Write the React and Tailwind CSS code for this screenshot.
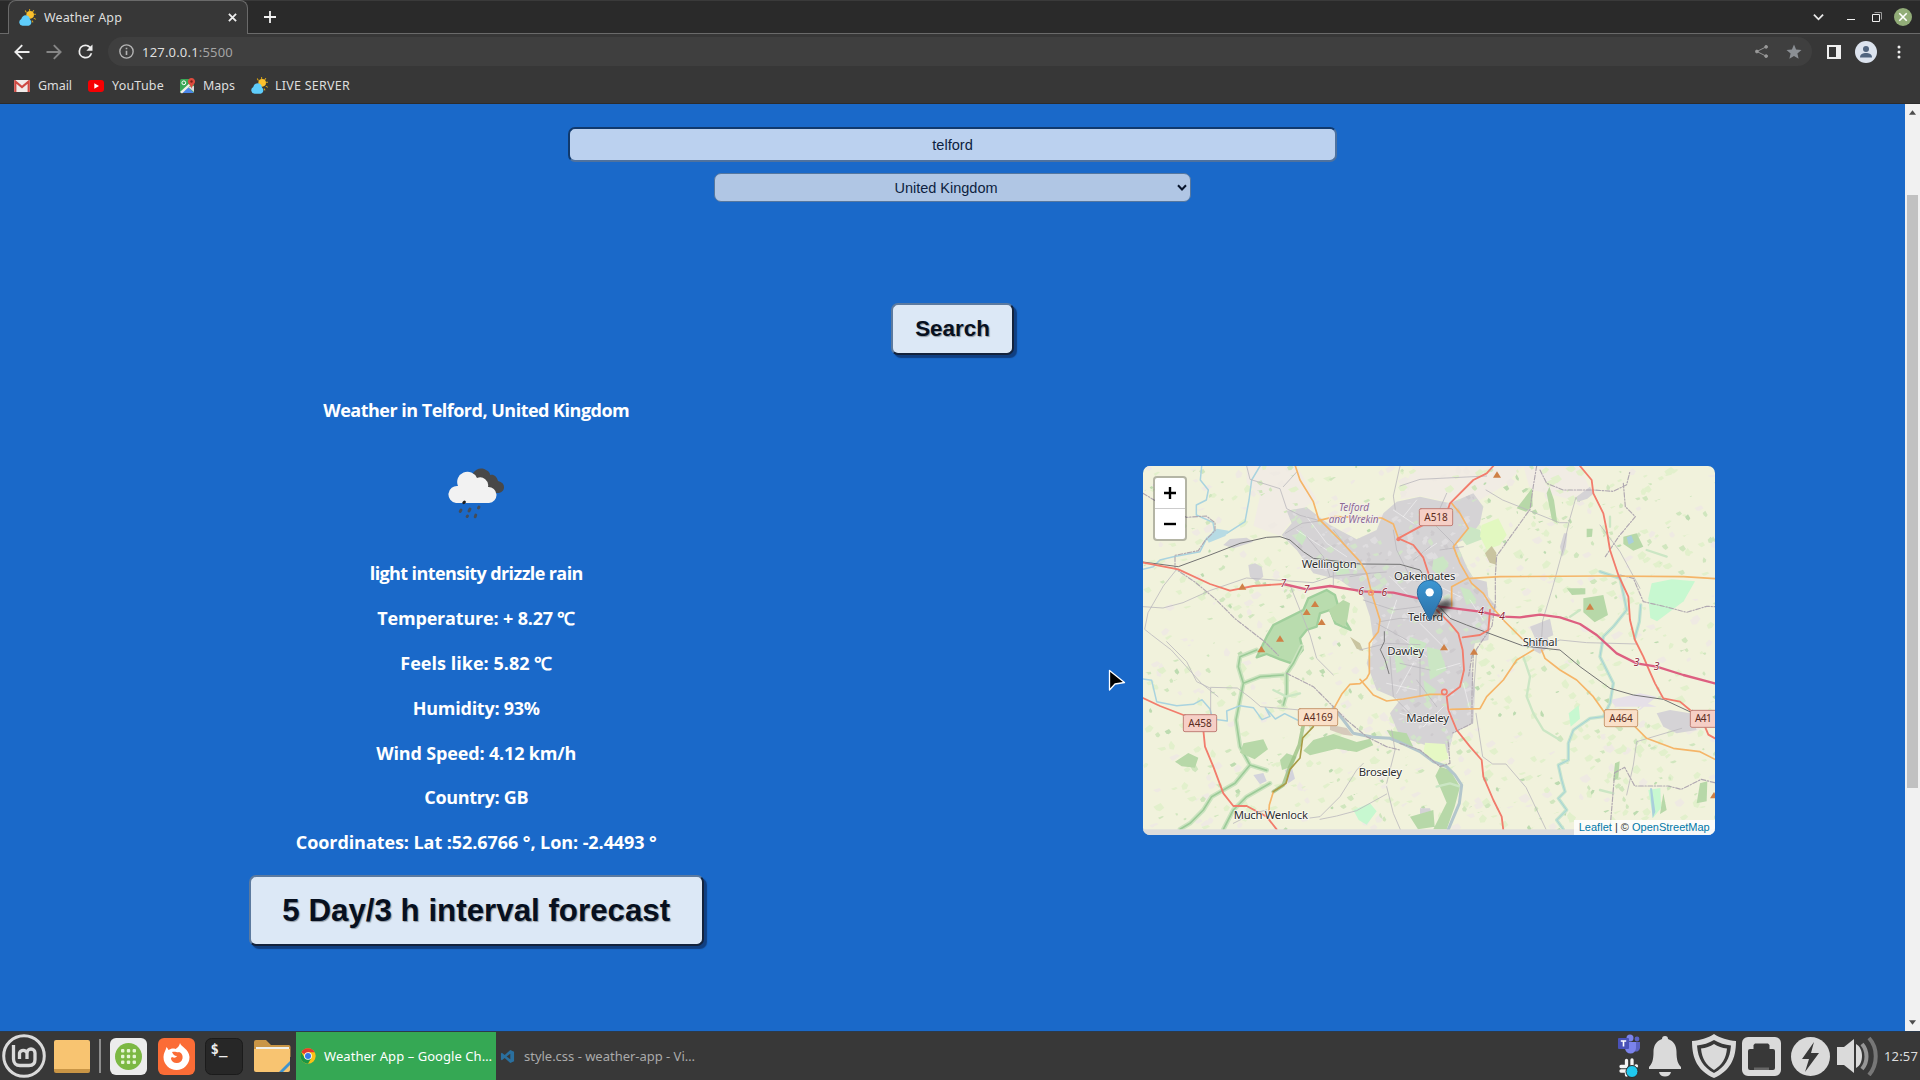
import React, { useLayoutEffect, useRef, useState } from "react";

// Text run whose letter spacing is adjusted so that it spans `w` pixels.
function Fit({ w, children, className = "" }) {
  const ref = useRef(null);
  const [ls, setLs] = useState(0);
  useLayoutEffect(() => {
    const n = ref.current.textContent.length;
    setLs((w - ref.current.getBoundingClientRect().width) / n);
  }, [w]);
  return (
    <span ref={ref} className={"inline-block whitespace-pre " + className} style={{ letterSpacing: ls + "px" }}>
      {children}
    </span>
  );
}

function SunCloud({ className }) {
  return (
    <svg viewBox="0 0 16 16" className={className}>
      <g stroke="#d9a514" strokeWidth="1" strokeLinecap="round">
        <path d="M10 .4v1.4M6 1.8l.8 1.2M13.8 1.4l-.8 1.2M15.8 5h-1.3M15.5 9.5l-1.2-.7M13 12.2l-.6-1" />
      </g>
      <circle cx="10.500" cy="5.500" r="3.600" fill="#fbc02d" />
      <path d="M3.400 15.800a3.300 3.300 0 0 1-1.200-6.300C2.400 6.600 6 4.600 8.600 6.600c1.800 1.300 1.200 2.600 2 3.400 1.900 1.800 1 5.400-1.600 5.800z" fill="#5fcdfb" />
    </svg>
  );
}

function ChromeLogo({ className }) {
  return (
    <svg viewBox="0 0 48 48" className={className}>
      <circle cx="24" cy="24" r="23" fill="#fbc116" />
      <path d="M24 24 4 12.6A23 23 0 0 1 44 12.5H24z" fill="#e33b2e" />
      <path d="M4 12.5A23 23 0 0 0 24 47l10-17.300L24 24l-10 6z" fill="#1a9646" />
      <circle cx="24" cy="24" r="11.500" fill="#fff" />
      <circle cx="24" cy="24" r="9" fill="#3779e8" />
    </svg>
  );
}

function BrowserChrome() {
  return (
    <header className="h-[104px] shrink-0 bg-[#373737] text-[#dedede] text-[12.5px] leading-[16px] border-b border-[#2c2c2c]">
      <div className="h-[34px] bg-[#2a2a2a] flex items-end border-b border-[#6a6a6a] border-t border-t-[#3a3a3a]">
        <div className="ml-2 w-[240px] h-[34px] -mb-px bg-[#373737] rounded-t-[8px] border border-b-0 border-[#6a6a6a] flex items-center pl-[10px] pr-[10px]">
          <SunCloud className="w-[17px] h-[17px]" />
          <Fit w={78} className="ml-[8px]">Weather App</Fit>
          <svg viewBox="0 0 10 10" className="w-[9px] h-[9px] ml-auto" stroke="#eee" strokeWidth="2">
            <path d="M1 1l8 8M9 1 1 9" />
          </svg>
        </div>
        <svg viewBox="0 0 12 12" className="w-[12px] h-[12px] ml-[16px] mb-[10px]" stroke="#f2f2f2" strokeWidth="1.8">
          <path d="M6 0v12M0 6h12" />
        </svg>
        <div className="ml-auto flex items-center h-[33px] pr-[8px]">
          <svg viewBox="0 0 12 8" className="w-[11px] h-[8px] mr-[23px]" fill="none" stroke="#e8e8e8" strokeWidth="2">
            <path d="M1 1.500l5 5 5-5" />
          </svg>
          <div className="w-[8px] h-px bg-[#f2f2f2] mt-[6px] mr-[17px]" />
          <svg viewBox="0 0 10 10" className="w-[10px] h-[10px] mr-[12px]" fill="none" stroke="#eee">
            <path d="M.5 2.500h7v7h-7z" />
            <path d="M2.500.5h7v7" stroke="#999" />
          </svg>
          <svg viewBox="0 0 18 18" className="w-[18px] h-[18px]">
            <circle cx="9" cy="9" r="9" fill="#92ad78" />
            <path d="M5.300 5.300l7.400 7.400M12.700 5.300l-7.400 7.400" stroke="#fff" strokeWidth="1.600" />
          </svg>
        </div>
      </div>
      <div className="h-[35px] flex items-center pl-[14px] pr-[19px]">
        <svg viewBox="0 0 16 16" className="w-[16px] h-[16px]" fill="none" stroke="#eee" strokeWidth="1.900">
          <path d="M15.500 8H2M8.200 1.200 1.400 8l6.800 6.800" />
        </svg>
        <svg viewBox="0 0 16 16" className="w-[16px] h-[16px] ml-[16px]" fill="none" stroke="#868686" strokeWidth="1.900">
          <path d="M.5 8H14M7.800 1.200 14.600 8l-6.800 6.800" />
        </svg>
        <svg viewBox="0 0 24 24" className="w-[21px] h-[21px] ml-[13px]" fill="#eee">
          <path d="M17.650 6.350A7.960 7.960 0 0 0 12 4a8 8 0 1 0 7.730 10h-2.080A6 6 0 1 1 12 6c1.660 0 3.140.690 4.220 1.780L13 11h7V4z" />
        </svg>
        <div className="ml-[12px] mr-[15px] h-[29px] flex-1 rounded-full bg-[#3f3f3f] flex items-center pl-[11px] pr-[9px]">
          <svg viewBox="0 0 14 14" className="w-[15px] h-[15px]" fill="none" stroke="#b4b4b4" strokeWidth="1.300">
            <circle cx="7" cy="7" r="6.200" />
            <path d="M7 6.200v4M7 3.500v1.400" strokeWidth="1.500" />
          </svg>
          <Fit w={91} className="ml-[8px] text-[13px]">
            127.0.0.1<span className="text-[#a4a4a4]">:5500</span>
          </Fit>
          <svg viewBox="0 0 14 14" className="w-[13px] h-[13px] ml-auto" fill="#9a9a9a" stroke="#9a9a9a">
            <path d="M12 2 2 7l10 5" fill="none" />
            <circle cx="12" cy="2" r="1.500" />
            <circle cx="2" cy="7" r="1.500" />
            <circle cx="12" cy="12" r="1.500" />
          </svg>
          <svg viewBox="0 0 24 24" className="w-[18px] h-[18px] ml-[17px]" fill="#8b8f94">
            <path d="M12 17.270 18.180 21l-1.640-7.030L22 9.240l-7.190-.610L12 2 9.190 8.630 2 9.240l5.460 4.730L5.820 21z" />
          </svg>
        </div>
        <div className="w-[14px] h-[14px] border-2 border-r-[5px] border-[#f0f0f0]" />
        <svg viewBox="0 0 22 22" className="w-[22px] h-[22px] ml-[14px]">
          <circle cx="11" cy="11" r="11" fill="#dce3ee" />
          <circle cx="11" cy="8" r="3" fill="#51657f" />
          <path d="M5 16.500c0-3.500 3-4.500 6-4.500s6 1 6 4.500z" fill="#51657f" />
        </svg>
        <svg viewBox="0 0 4 14" className="w-[4px] h-[14px] ml-[20px]" fill="#eee">
          <circle cx="2" cy="2" r="1.500" />
          <circle cx="2" cy="7" r="1.500" />
          <circle cx="2" cy="12" r="1.500" />
        </svg>
      </div>
      <div className="h-[33px] flex items-center pl-[14px]">
        <svg viewBox="0 0 16 12" className="w-[16px] h-[12px]">
          <rect width="16" height="12" rx="1" fill="#f1ebe9" />
          <path d="M1.300 12V1.500L8 7l6.700-5.500V12" fill="none" stroke="#cf4a43" strokeWidth="2.200" />
        </svg>
        <Fit w={34} className="ml-[8px]">Gmail</Fit>
        <svg viewBox="0 0 16 12" className="w-[16px] h-[12px] ml-[16px]">
          <rect width="16" height="12" rx="3" fill="#f60002" />
          <path d="M6.300 3.300v5.400L11 6z" fill="#fff" />
        </svg>
        <Fit w={52} className="ml-[8px]">YouTube</Fit>
        <svg viewBox="0 0 16 16" className="w-[16px] h-[16px] ml-[16px]">
          <rect y="1" width="14" height="14" rx="1.500" fill="#3aa757" />
          <path d="M1 15 7.500 8.500 14 15z" fill="#4a86e8" />
          <path d="M0 14 13 2l1.500 1.500L2 15.500z" fill="#f2efe6" />
          <path d="M8 9l6 5V8z" fill="#dadada" />
          <circle cx="3.800" cy="4.800" r="1.900" fill="none" stroke="#fff" strokeWidth="1" />
          <path d="M11.500 0a3.500 3.500 0 0 1 3.400 4.500c-.5 2-2.800 3-3.400 6-.6-3-2.900-4-3.400-6A3.500 3.500 0 0 1 11.500 0z" fill="#dd4b3e" />
          <circle cx="11.500" cy="3.500" r="1.200" fill="#7a1f17" />
        </svg>
        <Fit w={32} className="ml-[7px]">Maps</Fit>
        <SunCloud className="w-[17px] h-[17px] ml-[16px]" />
        <Fit w={75} className="ml-[7px]">LIVE SERVER</Fit>
      </div>
    </header>
  );
}

/* ---- Map drawing: 3 units per pixel ---- */

function patches(seed, count, size = 1) {
  let s = seed;
  const r = () => {
    s = (s * 16807) % 2147483647;
    return s / 2147483647;
  };
  return Array.from({ length: count }, () => {
    const x = 129 + r() * 1716;
    const y = 48 + r() * 1090;
    const a = (4 + r() * 16) * size;
    const b = (2 + r() * 9) * size;
    const k = r() * 12 - 6;
    return `M${x.toFixed(0)} ${y.toFixed(0)}l${a.toFixed(0)} ${(-b).toFixed(0)} ${b.toFixed(0)} ${(b + k).toFixed(0)} ${(-a * 0.6).toFixed(0)} ${b.toFixed(0)} ${(-b).toFixed(0)} ${(-k).toFixed(0)}z`;
  }).join("");
}

const PALE = patches(71, 420, 1.2);
const GREEN = patches(9001, 240, 0.8);
const DUST = patches(555, 260, 1.2);
const FOREST = patches(31337, 110, 0.7);
const TOWN_LIGHT = patches(4242, 1200, 0.9);
const TOWN_GREEN = patches(777, 800, 0.9);
const TOWN_DARK = patches(2024, 400, 0.8);

const URBAN =
  "M560 182L620 172 690 225 770 268 830 240 850 190 890 155 960 140 1050 160 1120 130 1150 170 1140 220 1110 260 1070 280 1100 350 1120 385 1160 395 1165 440 1190 470 1170 520 1165 570 1125 580 1110 640 1125 720 1120 820 1060 850 1045 910 960 880 900 860 870 790 900 750 830 720 800 640 820 570 810 500 790 440 720 390 640 370 590 300 545 255 575 220z";

const WREKIN =
  "M470 622L500 560 520 525 560 505 610 480 625 445 680 420 705 435 715 470 740 520 752 540 706 520 690 480 660 490 650 530 620 540 600 565 608 600 575 640 540 628 500 612z";

const ROADS_MINOR = [
  "M440 48l10 40 90 28 20 60 40 20 60 16M550 110l40-44M556 250l50-30 60-8M230 358l-40 50-46 80-10 50 20 16 60 46 90 100 50 40",
  "M129 470l60 4 60-16 80-36 110-38 200 14 60-20 160-12M332 715v95M332 712l80 2 40 30 30 26 120 10 40 10M570 405l60 150 20 70 50 50",
  "M900 108l60-20 200-10M1158 120l50 30 100 40 70 28 24 0M1428 142l-20 70-20 90-30 110-30 100-4 70M1500 225l60 80 60 110",
  "M1320 590l60-20 80 8 150 4M1128 790l20 130 30 22 40 0 60 70 60 126M1745 835l-135 40-10 70-20 90",
  "M200 575l60 60 30 60 42 20M860 1000l25-100-10-60M860 1010l20 80 26 60M630 1104l30-4 60-60 50-80 20-20M860 1032l-90 50-60 16-50 10M400 1120l60-30 40-10",
  "M780 600l80-20 100 4M840 515l60-10 100 6M900 48l-20 90 6 40M620 260l50 60 20 60M700 240l40 50M880 240l10 60 40 80M1000 220l60 60 10 40M960 600v140M900 640l90 20M1130 600l-10 140M870 620l10 120 70 70M950 690l60 80",
  "M790 450l90 30 80-10M830 520l90 50M700 350l0 60M750 380l60-10M990 290l-50 40M1020 300l70-10M1040 130l-40 90",
];

const BORDERS = [
  "M129 130l50 30 80 42 60-4 26 20v24l-30 30-20 30-70 14v40l60 40 60 50 60 60 90 70 40 40",
  "M1310 48l-10 60-10 70-50 70-50 70-4 60 0 80-10 70-60 90-10 60M1320 60l20 40 50 20 90 0 60 4 40-20 10-40M1570 100l6 70 30 30-50 60-40 60M1560 375l40 10 30 70 70 16 60 16 60-18 90 4",
  "M560 670l80 40 60 60 40 40 60 50 60 30 40 10M900 880l60 20 60 50 30-10-6-70M1120 610l-4 120v90l-60 30M1530 1138l10-120 4-50 30-16 30 56 100 0 40 10 60-30 40 10 20-30",
];

const ROADS_ORANGE = [
  "M586 48l14 42 40 65 15 50 65 65 60 65 20 35 15 60 25 80-5 35-27 35v90l-8 15-20 16-30 2-25 30-25 45",
  "M655 212l50-12 140 4 35 18 15 43M780 688l40 47 40 18 50-6 80-14h40M520 1025l-12 40-2 30",
  "M1055 160l25 30 25 45-45 55 20 50 35 60 35 30 25 40 35 40 60 60M1055 470v-60l45-24 100-6 300-2 250 2 95 6",
  "M1300 600l-50 30-40 60-50 50-20 36-90 2M1325 600l10 25 45 35 50 30 50 50 60 85M1600 825l40 40 80 30 80 10 45 23",
];

const ROADS_RED = [
  "M129 338l106 20 95 44 60 20 70-14 90-6M129 744l51 24 70 27 60 45 5 50 25 60 30 80 30 38h40l60 32 30 38",
  "M1180 48l-20 22-40 20-70 70-10 30-80 40-65 35 45 20 30 38 18 55 2 60M1010 480l40 40 25 30 13 50 4 60-12 50-40 30 5 40 25 60 40 50 35 40 5 50 30 70 25 50 5 40",
  "M1170 480l-5 60-25 15-52 7M1440 48l35 42 5 40 30 60 10 50 10 60 25 75 30 65 5 70 15 60 25 50 15 35 20 45 25 45 50 10 30 25M1815 830l10 24 20 11",
];

const RAIL = "M129 336L235 350 330 315 420 280 500 262 540 260 570 270 610 305 640 325 780 342 900 343 960 360 985 400 1000 450 1050 505 1100 525 1270 588 1380 600 1440 650 1530 715 1600 735 1690 748 1780 790";

const MOTORWAY = "M550 402l70 16 70-10 100 16 90 4 80 18 60 24 120 15 70 15 50 2 60-8 60 8 60 20 50 33 60 55 60 30 60 10 80 25 95 25";

const RIVERS = [
  "M305 48l-4 42 24 30-6 30-30 15v30l50 22 4 24-20 28M480 48l-25 42-8 60-12 65-55 35-60 15-20 40-80 15-40 10-20 20-32 8",
  "M129 687l26 4 15 64 60 12 50-4 26-14 24 28 8 30 44 6-2-30 40-16 40 6 26 36 24-10-14-26 30 34 28-16 44 22",
];
const SEVERN = "M700 772L730 810 760 850 820 862 870 865 900 877 960 905 1000 935 1040 950 1065 975 1085 1005 1078 1060 1045 1138";
const EAST_RIVER =
  "M1500 365L1560 385 1572 440 1580 480 1540 530 1510 560 1500 620 1540 700 1530 760 1510 800 1470 805 1420 840 1405 880 1405 930 1375 945 1385 990 1395 1025 1375 1045 1400 1080 1370 1110 1390 1138M1622 465l-4 50-14 50";
const BROOKS = "M1270 620L1290 680 1280 740 1300 790 1330 840 1380 870M1440 480l-30 20M1640 300l60 20M1530 200l0 30M520 720l40 20 40-10M1010 1010l40-10 30 10M1500 1020l40 10";
const WOOD_EDGES =
  "M470 600L420 620 415 650 430 700 420 750 408 810 420 890 450 945 405 1000 335 1040 310 1080 270 1120 240 1138M605 590L580 640 560 670 560 730 550 765M510 1000L440 1040 400 1080 370 1138M430 700L480 680 550 675M450 945l50 16";

const PEAKS = [[427, 410], [645, 462], [620, 486], [665, 516], [540, 566], [484, 598], [1191, 74], [1470, 470], [1032, 592], [1122, 605], [1842, 1036]];

const PLACES = [
  ["Wellington", 605, 354, 165],
  ["Oakengates", 882, 389, 184],
  ["Telford", 924, 512, 106],
  ["Shifnal", 1268, 588, 104],
  ["Dawley", 862, 616, 110],
  ["Madeley", 919, 815, 128],
  ["Broseley", 776, 979, 130],
  ["Much Wenlock", 401, 1106, 223],
];

const SHIELDS = [
  ["A518", 958, 176, 100, "#f6cfc6", "#c08078"],
  ["A458", 250, 794, 100, "#f6cfc6", "#c08078"],
  ["A4169", 595, 776, 118, "#fae0c8", "#c89a70"],
  ["A464", 1513, 779, 100, "#fae0c8", "#c89a70"],
];

const JUNCTIONS = [["7", 550, 411], ["7", 620, 430], ["6", 783, 434], ["6", 853, 438], ["4", 1143, 496], ["4", 1206, 509], ["3", 1610, 648], ["3", 1670, 660]];

function MapCanvas() {
  return (
    <svg viewBox="129 48 1716 1107" className="block w-full h-full font-['Noto_Sans',sans-serif]" fill="none" strokeLinejoin="round" strokeLinecap="round">
      <defs>
        <clipPath id="town"><path d={URBAN} /></clipPath>
        <linearGradient id="pin" x1="0" y1="0" x2="0" y2="1">
          <stop offset="0" stopColor="#3c97d3" />
          <stop offset="1" stopColor="#2b6fa6" />
        </linearGradient>
        <filter id="soft" x="-30%" y="-30%" width="160%" height="160%">
          <feGaussianBlur stdDeviation="6" />
        </filter>
      </defs>
      <rect x="129" y="48" width="1716" height="1107" fill="#f1f2dc" />
      <path d="M440 48h150l60 100-60 40-50 70-80-30 20-90-40-40zM940 48h330l-60 60-100 60-150-30-60 10zM1270 48h170l30 70-60 30-120-30z" fill="#f1ece4" />
      <path d={DUST} fill="#efeae3" />
      <path d={PALE} fill="#e2f0cc" />
      <path d={GREEN} fill="#d0e6be" />
      <path d={FOREST} fill="#bddbb0" />
      <path d={URBAN} fill="#d5d3d5" />
      <g clipPath="url(#town)">
        <path d={TOWN_DARK} fill="#cdcacd" />
        <path d={TOWN_LIGHT} fill="#dfdddf" />
        <path d={TOWN_GREEN} fill="#d2e3ca" />
      </g>
      <path d="M445 345l20-5 20 10 5 30-20 15-20-15zM370 285l20-18 50-4 20 12-60 20zM1430 140l40-30 12 20-20 16-30 10zM1380 290l12-40 10 0-4 40-10 30zM1290 575l50-24 10 36-30 24-20-10zM1670 790l40-10 60 10 20 50-60 10-40-20zM1290 530l60-24 10 50-50 20zM960 1075l30 0 10 30-40 0z" fill="#d5d3d6" />
      <path d="M1530 750l90-20 50 10-50 40-70-6zM1540 770l60 20 40-30 30 10" fill="#e6e0e8" />
      <path d="M565 1000l-10-40 20-10 10 36zM460 975l30-6 10 24-20 10z" fill="#d3d3dc" />
      <path d="M600 240l20 20-14 26-20-20zM700 330l40 10 10 30-40 6zM1000 330l30-12 16 30-30 30-20-20zM1110 230l30 10 10 26-50 20-16-20zM930 560l50 20-20 40-40-6zM980 590l40 10 20 60-50 30zM880 590l40 60-30 20zM970 690l40 30-30 40zM1080 410l30 10 20 30-30 16z" fill="#cbe6c4" />
      <path d="M1145 225l50-20 25 50-20 30-40 14-20-40z" fill="#e2f8c0" />
      <path d="M1645 445l10-45 60-12 70 6-34 60-40 30-40 30-20-10z" fill="#c7f8d0" />
      <path d="M1406 790l30-24 4 40-28 24zM1645 1020l36-6 2 60-24 30zM760 1080l50-20 20 24-30 40-24-14z" fill="#c7f8d0" />
      <path d="M975 878l60 4 10 44-36 14-40-24z" fill="#e6f8c4" />
      <path d={WREKIN} fill="#b9dcae" stroke="#a0cf9c" strokeWidth="7" />
      <path d={WOOD_EDGES} stroke="#cbe3bf" strokeWidth="14" />
      <path d={WOOD_EDGES} stroke="#9ccb98" strokeWidth="5" />
      <path d="M430 880l60-12 14 30-40 30-44-20zM225 935l40-26 30 14-10 30-40-4zM640 870l60-18 70 24 40-10 10 20-50 20-60-10-80 20-20-14zM540 930l20-20 30 10-14 30-30 10zM860 840l60 10 20 40-60-16zM1020 950l30 10 30 50-16 60-24 68-40 0 40-80-34-80zM1250 175l46-60 2 54-20 16zM1340 130l16 80 16 10-10-70-14-40zM1450 445l60-10 14 60-40 22-34-30zM1400 415h56v18l-40 2zM1570 260l40-10 20 40-30 12-30-20zM1460 236l18 0-2 24-16 2zM1545 940l14-6-4 50-16 10zM1800 1000l22-6-2 60-30 6zM1690 1030l10 50-20 12zM930 1100l70-20 4 50-50 8zM700 510l-14-30 44-30 20 10-8 50-10 20z" fill="#b7d8a8" />
      <path d="M1155 310l20-22 14 20 0 36-20-6zM750 560l30 20 10 24-20-8z" fill="#c9c4a0" />
      <path d="M690 824l50 10 20 24-30-4-40-14z" fill="#d6cabb" />
      <path d="M610 825l-12 60-30 70-18 50-30 20" stroke="#9cc285" strokeWidth="11" opacity=".8" />

      <path d={BROOKS} stroke="#cbe6c4" strokeWidth="7" />
      <path d={EAST_RIVER} stroke="#c4e4cd" strokeWidth="10" />
      <path d={EAST_RIVER} stroke="#a5d2d8" strokeWidth="3" />
      {RIVERS.map((d) => (
        <path key={d} d={d} stroke="#a9d3df" strokeWidth="4.500" />
      ))}
      <path d="M320 262l30-26 36 6-10 16-50 20z" fill="#b7dbe4" />
      <path d={SEVERN} stroke="#b3c6cc" strokeWidth="9" />
      <path d="M1580 262l14-6 8 20-16 8zM1650 1015l6 0 10 70-8 20z" fill="#a9cfdc" />

      <g stroke="#fff" strokeWidth="2" opacity=".7">
        <path d="M620 200l60 80 60 40M590 240l90 60M650 330l120 30M880 180l60 40M910 200l40-50M950 320l60-40M870 380l60 60M890 450l-30 90M1000 400l80 40M1110 450l40 60M900 560l80 60M860 700l90 20M940 640l-50 90M1010 660l70-20M1030 770l-60 60M1090 700l20 80M900 790l90 30M960 520l70 70" />
      </g>
      {ROADS_MINOR.map((d) => (
        <path key={d} d={d} stroke="#bcb9be" strokeWidth="2.500" />
      ))}
      {BORDERS.map((d) => (
        <path key={d} d={d} stroke="#b0a8b1" strokeWidth="3.500" strokeDasharray="14 5 4 5" />
      ))}
      <path d="M853 545v30l-12 24 14 30 12 42" stroke="#666" strokeWidth="2.500" />
      <path d={RAIL} stroke="#737373" strokeWidth="3" />
      {ROADS_ORANGE.map((d) => (
        <path key={d} d={d} stroke="#f5b568" strokeWidth="5" />
      ))}
      <path d="M640 830l-32 34-8 60-30 34-12 42-38 25" stroke="#a89b45" strokeWidth="5" />
      {ROADS_RED.map((d) => (
        <path key={d} d={d} stroke="#f27c6c" strokeWidth="5.500" />
      ))}
      <path d={MOTORWAY} stroke="#dd5f80" strokeWidth="7" />
      <circle cx="1033" cy="726" r="8" stroke="#f27c6c" strokeWidth="5" />
      <circle cx="895" cy="268" r="6" fill="#f27c6c" />
      <circle cx="813" cy="428" r="7" stroke="#f3a06b" strokeWidth="5" />

      {PEAKS.map(([x, y]) => (
        <path key={x + "-" + y} d={`M${x} ${y - 10}l12 19h-24z`} fill="#cf8146" />
      ))}

      {SHIELDS.map(([t, x, y, w, bg, line]) => (
        <g key={t}>
          <rect x={x} y={y} width={w} height="51" rx="5" fill={bg} stroke={line} strokeWidth="3" />
          <text x={x + 15} y={y + 36} textLength={w - 30} fontSize="30" fill="#5b2b20">{t}</text>
        </g>
      ))}
      <rect x="1771" y="781" width="100" height="51" rx="5" fill="#f6cfc6" stroke="#c08078" strokeWidth="3" />
      <text x="1785" y="817" textLength="50" fontSize="30" fill="#5b2b20">A41</text>

      {JUNCTIONS.map(([t, x, y]) => (
        <text key={x} x={x} y={y} textAnchor="middle" fontSize="31" fontStyle="italic" fill="#8c2435" stroke="#fff" strokeWidth="3" paintOrder="stroke">{t}</text>
      ))}
      <g fontSize="30" fontStyle="italic" fill="#8d6a93" stroke="#f4f0ee" strokeWidth="4" paintOrder="stroke">
        <text x="717" y="183" textLength="90">Telford</text>
        <text x="686" y="218" textLength="150">and Wrekin</text>
      </g>
      {PLACES.map(([t, x, y, w]) => (
        <text key={t} x={x} y={y} textLength={w} fontSize="34" fill="#2f2f2f" stroke="#fff" strokeOpacity=".75" strokeWidth="5" paintOrder="stroke">{t}</text>
      ))}
      <rect x="129" y="1138" width="1716" height="17" fill="#dcdcdc" />

      <path d="M990 508l22-48 34-12 14 16-34 26z" fill="#000" opacity=".6" filter="url(#soft)" />
      <path d="M989 391c-21 0-37 16-37 37 0 12 5 22 10 31l27 52 27-52c5-9 10-19 10-31 0-21-16-37-37-37z" fill="url(#pin)" stroke="#2c6c9f" strokeWidth="3" />
      <circle cx="989" cy="427" r="12.500" fill="#fff" />
    </svg>
  );
}

function WeatherMap() {
  return (
    <div className="relative w-[572px] h-[369px] mt-[110px] rounded-[7px] overflow-hidden">
      <MapCanvas />
      <div className="absolute left-[10px] top-[10px] w-[34px] h-[65px] rounded-[4px] border-2 border-black/25 bg-clip-padding bg-white flex flex-col">
        <div className="flex-1 flex items-center justify-center border-b border-[#ccc] pl-px">
          <svg viewBox="0 0 12 12" className="w-[12px] h-[12px]" stroke="#000" strokeWidth="2.400"><path d="M6 0v12M0 6h12" /></svg>
        </div>
        <div className="flex-1 flex items-center justify-center pl-px">
          <svg viewBox="0 0 12 12" className="w-[12px] h-[12px]" stroke="#000" strokeWidth="2.400"><path d="M0 6h12" /></svg>
        </div>
      </div>
      <div className="absolute right-0 bottom-0 h-[15px] pl-[5px] pr-[5px] bg-white/80 text-[11px] leading-[15px] text-[#333] font-['Liberation_Sans',sans-serif]">
        <Fit w={131}>
          <span className="text-[#0078a8]">Leaflet</span> | © <span className="text-[#0078a8]">OpenStreetMap</span>
        </Fit>
      </div>
    </div>
  );
}

const READINGS = [
  ["light intensity drizzle rain", 213],
  ["Temperature: + 8.27 ℃", 198],
  ["Feels like: 5.82 ℃", 152],
  ["Humidity: 93%", 127],
  ["Wind Speed: 4.12 km/h", 200],
  ["Country: GB", 104],
  ["Coordinates: Lat :52.6766 °, Lon: -2.4493 °", 361],
];

function RainCloud() {
  return (
    <svg viewBox="0 0 56 51" className="w-[56px] h-[51px]">
      <path d="M25 5C28 1 33-1 38 2c3 1 4 3 4 5 4-1 7 2 8 6 4 1 6 3 6 6 0 4-3 6-7 6H30z" fill="#484848" />
      <path d="M8 35a8.500 8.500 0 0 1 2-17 10 10 0 0 1 19-8 8 8 0 0 1 11 9 8 8 0 0 1 1 16z" fill="#f2f2f2" />
      <g stroke="#444c58" strokeWidth="2.800" strokeLinecap="round">
        <path d="M13 42l-.8 1.500M22 41l-1 2M31 39l-.5 1M19.500 48l-.4.6M27.800 47l-.6 1.800" />
        <path d="M16.500 34l-.8.800" stroke="#1c1c1c" />
      </g>
    </svg>
  );
}

function Page() {
  return (
    <main className="flex-1 bg-[#1a69c9] flex flex-col items-center pt-[23px] font-['Liberation_Sans',sans-serif]">
      <div className="w-[769px] h-[35px] pt-[2px] rounded-[7px] border-2 border-t-[#10396d] border-l-[#10396d] border-r-[#4f729e] border-b-[#4f729e] bg-[#bbd1ef] flex items-center justify-center text-[14.600px] text-[#0d1f40]">
        telford
      </div>
      <div className="mt-[11px] w-[477px] h-[29px] rounded-[7px] border border-[#55779f] bg-[#b0c6e4] flex items-center text-[14.500px] text-[#0d1f40] pr-[3px]">
        <span className="flex-1 text-center pt-[2px]">United Kingdom</span>
        <svg viewBox="0 0 10 8" className="w-[10px] h-[8px]" fill="none" stroke="#08152c" strokeWidth="2"><path d="M1 1.200l4 4.300 4-4.300" /></svg>
      </div>
      <div className="mt-[101px] w-[123px] h-[52px] rounded-[7px] border-2 border-t-[#5c7a9f] border-l-[#5c7a9f] border-r-[#14233c] border-b-[#14233c] bg-[#dce8f6] shadow-[3px_3px_1px_rgba(10,30,70,0.55)] flex items-center justify-center text-[22.400px] leading-[26px] font-bold text-[#07101f] [text-shadow:1px_1px_1px_rgba(0,0,0,0.35)]">
        Search
      </div>
      <div className="w-full grid grid-cols-2 pt-px">
        <section className="flex flex-col items-center text-white text-[18px] leading-[24px] font-bold font-['Open_Sans',sans-serif] pt-[42px]">
          <Fit w={306}>Weather in Telford, United Kingdom</Fit>
          <div className="h-[46px]" />
          <div className="mr-[1px]"><RainCloud /></div>
          <div className="mt-[42px] flex flex-col items-center gap-[20.900px]">
            {READINGS.map(([t, w]) => (
              <Fit key={t} w={w}>{t}</Fit>
            ))}
          </div>
          <div className="mt-[21px] w-[455px] h-[71px] rounded-[7px] border-2 border-t-[#5c7a9f] border-l-[#5c7a9f] border-r-[#14233c] border-b-[#14233c] bg-[#dce8f6] shadow-[3px_3px_1px_rgba(10,30,70,0.55)] flex items-center justify-center text-[31.300px] leading-[36px] font-bold text-[#07101f] font-['Liberation_Sans',sans-serif] [text-shadow:1px_1px_1px_rgba(0,0,0,0.35)]">
            5 Day/3 h interval forecast
          </div>
        </section>
        <section className="flex justify-center">
          <WeatherMap />
        </section>
      </div>
    </main>
  );
}

function Scrollbar() {
  return (
    <div className="w-[15px] bg-[#f1f1f1] flex flex-col items-center py-[6px]">
      <svg viewBox="0 0 8 5" className="w-[7px] h-[5px]" fill="#4c4c4c"><path d="M0 5 4 0l4 5z" /></svg>
      <div className="mt-[80px] w-[11px] h-[593px] bg-[#c1c1c1]" />
      <svg viewBox="0 0 8 5" className="w-[7px] h-[5px] mt-auto" fill="#4c4c4c"><path d="M0 0l4 5 4-5z" /></svg>
    </div>
  );
}

function Taskbar() {
  return (
    <footer className="h-[49px] shrink-0 bg-[#383838] flex items-center border-t border-[#2c3a4a] text-[13px] text-white">
      <svg viewBox="0 0 44 44" className="w-[44px] h-[44px] ml-[2px]" fill="none" stroke="#dadada">
        <circle cx="22" cy="22" r="20.300" strokeWidth="3" />
        <path d="M11.500 11v14c0 4 2.500 6.500 6.500 6.500h9c4 0 6-2.500 6-6V19a4 4 0 0 0-8 0v6M25 19a4 4 0 0 0-7.500 0v6" strokeWidth="3.300" />
      </svg>
      <div className="ml-[8px] w-[36px] h-[33px] rounded-[2px] bg-[#f8c471] border-b-4 border-[#c99545] shrink-0" />
      <div className="ml-[9px] w-[2px] h-[34px] bg-[#8d8d8d]" />
      <svg viewBox="0 0 37 37" className="w-[37px] h-[37px] ml-[9px]">
        <rect width="37" height="37" rx="6" fill="#ececec" />
        <circle cx="18.500" cy="18.500" r="13.500" fill="#7cb843" />
        <g fill="#e6f5d4">
          {[11, 16.800, 22.600].map((x) => [11, 16.800, 22.600].map((y) => <rect key={x + "_" + y} x={x} y={y} width="3.400" height="3.400" rx="1" />))}
        </g>
      </svg>
      <svg viewBox="0 0 37 37" className="w-[37px] h-[37px] ml-[11px]">
        <rect width="37" height="37" rx="6" fill="#fb6c36" />
        <path d="M22 5c1 4 9 6 9.500 14A13 13 0 0 1 5.500 19c0-4 2-6 3-10 1 1 1.500 2 2 3 2-1 4-2 7-1 2-1 4-3 4.500-6z" fill="#fff" />
        <path d="M14 14c4-1 5 1 7 0 3 1 4 4 3.500 6.500A6 6 0 0 1 13 21c0-1 .5-2 1-2 2 1 4 1 5-1-3 0-4-2-5-4z" fill="#fb6c36" />
      </svg>
      <svg viewBox="0 0 38 37" className="w-[38px] h-[37px] ml-[10px] font-['DejaVu_Sans_Mono',monospace]">
        <rect x=".5" y=".5" width="37" height="36" rx="6" fill="#272727" stroke="#1b1b1b" />
        <text x="5.500" y="16" fontSize="14" fontWeight="bold" fill="#eee">$_</text>
      </svg>
      <svg viewBox="0 0 38 34" className="w-[38px] h-[34px] ml-[10px]">
        <path d="M1 3a2 2 0 0 1 2-2h10l5 5h18a2 2 0 0 1 1.500 2v10H1z" fill="#c99545" />
        <rect x="3" y="8" width="33" height="10" fill="#f0efe9" />
        <path d="M1 10h36v21a2 2 0 0 1-2 2H3a2 2 0 0 1-2-2z" fill="#f8c471" />
        <path d="M26 33 37 22v4l-7 7z" fill="#3f93cf" />
      </svg>
      <div className="ml-[5px] w-[200px] h-[48px] bg-[#35a854] flex items-center pl-[4px]">
        <ChromeLogo className="w-[16px] h-[16px]" />
        <Fit w={168} className="ml-[8px] pt-[2px]">Weather App – Google Ch…</Fit>
      </div>
      <svg viewBox="0 0 16 16" className="w-[15px] h-[15px] ml-[4px]">
        <path d="M11 1l4 2v10l-4 2-6-5.500-3 2.500-1-.8v-6.400L2 4l3 2.500zM11 5 7 8l4 3z" fill="#2a6f9e" fillRule="evenodd" />
      </svg>
      <Fit w={171} className="ml-[9px] pt-[2px] text-[#aaa]">style.css - weather-app - Vi…</Fit>
      <div className="ml-auto flex items-center pr-[2px]">
        <div className="flex flex-col items-center gap-[4px] mr-[8px]">
          <svg viewBox="0 0 22 20" className="w-[22px] h-[20px]">
            <circle cx="12" cy="4" r="3.500" fill="#7b83eb" />
            <circle cx="19" cy="5" r="2.400" fill="#5a62c3" />
            <path d="M15 8h7v6a4 4 0 0 1-6 3z" fill="#5a62c3" />
            <path d="M7 8h11v6a5.500 5.500 0 0 1-11 0z" fill="#7b83eb" />
            <rect y="4" width="11" height="11" rx="1" fill="#4a52b8" />
            <path d="M2.800 7h5.400M5.500 7v5.500" stroke="#fff" strokeWidth="1.600" />
          </svg>
          <svg viewBox="0 0 22 20" className="w-[22px] h-[20px]">
            <g stroke="#f4f4f4" strokeWidth="3.300" strokeLinecap="round">
              <path d="M8.500 2.500v5M3 8.500h5M14 2v6M18 8h.5M3 13h5M8.500 13v4" />
            </g>
            <circle cx="14" cy="13.500" r="6" fill="#1fc8ee" stroke="#2b2b2b" />
          </svg>
        </div>
        <svg viewBox="0 0 34 42" className="w-[34px] h-[42px]" fill="#dadada">
          <path d="M17 1c2 0 3 1 3 3 6 2 8.500 7 8.500 13 0 8 1.500 12 4.500 15v2H1v-2c3-3 4.500-7 4.500-15C5.500 11 8 6 14 4c0-2 1-3 3-3zM11 37h12c-.5 3-3 4.500-6 4.500S11.500 40 11 37z" />
        </svg>
        <svg viewBox="0 0 44 44" className="w-[44px] h-[44px] ml-[10px]" fill="#dadada">
          <path fillRule="evenodd" d="M22 0c6 4 14 6.500 22 7 0 18-6 30-22 37C6 37 0 25 0 7 8 6.500 16 4 22 0zm0 6c5 3 11 5 17 5.500C38 25 33 33 22 39 11 33 6 25 5 11.500 11 11 17 9 22 6z" />
          <path d="M22 10c4 2.500 8 4 13 4.500C34 25 30 31 22 36c-8-5-12-11-13-21.500C14 14 18 12.500 22 10z" />
        </svg>
        <svg viewBox="0 0 39 39" className="w-[39px] h-[39px] ml-[6px]">
          <rect x="2" y="2" width="35" height="35" rx="4" fill="#383838" stroke="#dadada" strokeWidth="4" />
          <path d="M3 3h33v33H3z" fill="#dadada" />
          <path d="M13 6.500h13l1.500 1.500v4h3.500a2 2 0 0 1 2 2v17a2 2 0 0 1-2 2H8a2 2 0 0 1-2-2V14a2 2 0 0 1 2-2h3.500V8z" fill="#383838" />
          <path d="M12 30.500h15V33H12z" fill="#666" />
        </svg>
        <svg viewBox="0 0 39 39" className="w-[39px] h-[39px] ml-[10px]">
          <circle cx="19.500" cy="19.500" r="19.500" fill="#dadada" />
          <path d="M23 5 11 22h7l-4 13 14-19h-8z" fill="#383838" />
        </svg>
        <svg viewBox="0 0 42 40" className="w-[42px] h-[40px] ml-[7px]">
          <path d="M0 11h7L17 3v34L7 29H0zM19 8c8 4 8 20 0 24z" fill="#dadada" />
          <path d="M25 8c6 7 6 18 0 25" fill="none" stroke="#969696" strokeWidth="4" />
          <path d="M32 2c9 10 9 26 0 37" fill="none" stroke="#777" strokeWidth="4" />
        </svg>
        <Fit w={34} className="ml-[5px] pt-[1px] text-[#ddd]">12:57</Fit>
      </div>
    </footer>
  );
}

export default function App() {
  return (
    <div className="relative w-[1920px] h-[1080px] overflow-hidden flex flex-col font-['Noto_Sans',sans-serif]">
      <BrowserChrome />
      <div className="flex-1 flex min-h-0">
        <Page />
        <Scrollbar />
      </div>
      <Taskbar />
      <svg viewBox="0 0 18 23" className="absolute left-[1108px] top-[669px] w-[18px] h-[23px]">
        <path d="M1.500 1.500v19.500l5.500-6 9.500-1.500z" fill="#000" stroke="#fff" strokeWidth="1.300" strokeLinejoin="round" />
      </svg>
    </div>
  );
}
